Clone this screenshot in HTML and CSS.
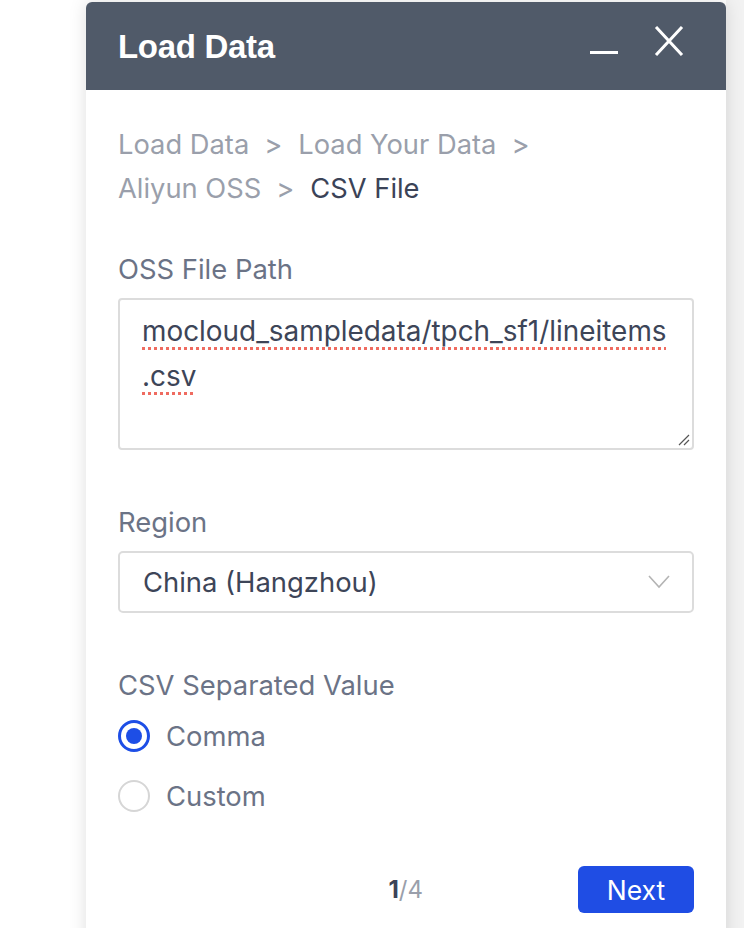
FILE: index.html
```html
<!DOCTYPE html>
<html lang="en">
<head>
<meta charset="utf-8">
<title>Load Data</title>
<link rel="stylesheet" href="styles.css">
</head>
<body>
<div class="panel">
  <div class="header">
    <div class="title">Load Data</div>
    <div class="actions">
      <span class="min"></span>
      <svg class="close" width="30" height="30" viewBox="0 0 30 30"><path d="M2 1 L28 29 M28 1 L2 29" stroke="#fff" stroke-width="3" fill="none"/></svg>
    </div>
  </div>
  <div class="body">
    <div class="crumbs">
      <span class="crumb">Load Data</span><span class="sep">&gt;</span><span class="crumb">Load Your Data</span><span class="sep">&gt;</span><br><span class="crumb">Aliyun OSS</span><span class="sep">&gt;</span><span class="crumb current">CSV File</span>
    </div>

    <div class="label first">OSS File Path</div>
    <div class="textarea">
      <span class="spell">mocloud_sampledata/tpch_sf1/lineitems</span><br><span class="spell">.csv</span>
      <svg class="grip" width="14" height="14" viewBox="0 0 14 14"><path d="M13 3 L3 13 M13 8 L8 13" stroke="#555" stroke-width="1.2" fill="none"/></svg>
    </div>

    <div class="label">Region</div>
    <div class="select">
      <span>China (Hangzhou)</span>
      <svg class="chev" width="22" height="14" viewBox="0 0 22 14"><path d="M1 1 L11 12 L21 1" stroke="#b4b4b4" stroke-width="1.6" fill="none"/></svg>
    </div>

    <div class="label">CSV Separated Value</div>
    <div class="radios">
      <div class="radio"><span class="dot on"></span><span>Comma</span></div>
      <div class="radio"><span class="dot"></span><span>Custom</span></div>
    </div>

    <div class="footer">
      <div class="pager"><b>1</b>/4</div>
      <button class="next">Next</button>
    </div>
  </div>
</div>
</body>
</html>
```

FILE: styles.css
```css
html, body {
  margin: 0;
  padding: 0;
}
body {
  width: 744px;
  height: 928px;
  overflow: hidden;
  background: linear-gradient(to right, #ffffff 726px, #f2f2f2 726px);
  font-family: Inter, "Noto Sans", sans-serif;
}
.panel {
  margin: 2px 0 0 86px;
  width: 640px;
  height: 960px;
  background: #fff;
  border-radius: 6px 6px 0 0;
  box-shadow: 0 0 18px rgba(0, 0, 0, 0.13);
}
.header {
  height: 88px;
  background: #505a69;
  border-radius: 6px 6px 0 0;
  display: flex;
  align-items: center;
  justify-content: space-between;
  padding: 0 42px 0 32px;
}
.title {
  font-family: "Liberation Sans", Arial, sans-serif;
  font-weight: bold;
  font-size: 33px;
  color: #fff;
  letter-spacing: -0.3px;
  margin-top: 2px;
}
.actions {
  display: flex;
  align-items: flex-end;
  gap: 36px;
  margin-top: -10px;
}
.min {
  width: 28px;
  height: 3px;
  background: #fff;
  margin-bottom: 2px;
}
.close {
  display: block;
}
.body {
  padding: 33px 32px 0 32px;
}
.crumbs {
  font-size: 27.3px;
  line-height: 44px;
  color: #9a9fab;
}
.sep {
  margin: 0 16px 0 15px;
}
.current {
  color: #3b4357;
}
.label {
  font-size: 27.4px;
  line-height: 44px;
  color: #6b7386;
  margin-top: 50px;
  margin-bottom: 7px;
}
.label.first {
  margin-top: 36px;
  margin-bottom: 7px;
}
.textarea {
  position: relative;
  box-sizing: border-box;
  height: 152px;
  border: 2px solid #dcdcdc;
  border-radius: 4px;
  padding: 9px 22px;
  font-size: 27.9px;
  line-height: 45px;
  color: #3d4558;
  white-space: nowrap;
}
.spell {
  text-decoration: underline dotted #ef6b60;
  text-decoration-thickness: 3px;
  text-underline-offset: 6px;
}
.grip {
  position: absolute;
  right: 2px;
  bottom: 2px;
}
.select {
  height: 62px;
  box-sizing: border-box;
  border: 2px solid #dcdcdc;
  border-radius: 5px;
  display: flex;
  align-items: center;
  justify-content: space-between;
  padding: 0 22px 0 23px;
  font-size: 27.4px;
  color: #3d4558;
}
.chev {
  margin-top: 0;
}
.radios {
  display: flex;
  flex-direction: column;
  gap: 16px;
  margin-top: 0;
}
.radio {
  display: flex;
  align-items: center;
  gap: 16px;
  height: 44px;
  font-size: 27.4px;
  color: #6b7386;
}
.dot {
  width: 32px;
  height: 32px;
  box-sizing: border-box;
  border: 2px solid #d6d6d6;
  border-radius: 50%;
  display: flex;
  align-items: center;
  justify-content: center;
}
.dot.on {
  border: 3px solid #1d4ee6;
}
.dot.on::after {
  content: "";
  width: 16px;
  height: 16px;
  border-radius: 50%;
  background: #1d4ee6;
}
.footer {
  margin-top: 48px;
  display: flex;
  align-items: center;
  justify-content: flex-end;
  gap: 155px;
}
.pager {
  font-size: 24px;
  color: #9a9fab;
}
.pager b {
  color: #3b4357;
}
.next {
  width: 116px;
  height: 47px;
  border: none;
  border-radius: 6px;
  background: #1f4de4;
  color: #fff;
  font-family: Inter, "Noto Sans", sans-serif;
  font-size: 26.5px;
  padding: 0;
}
```
